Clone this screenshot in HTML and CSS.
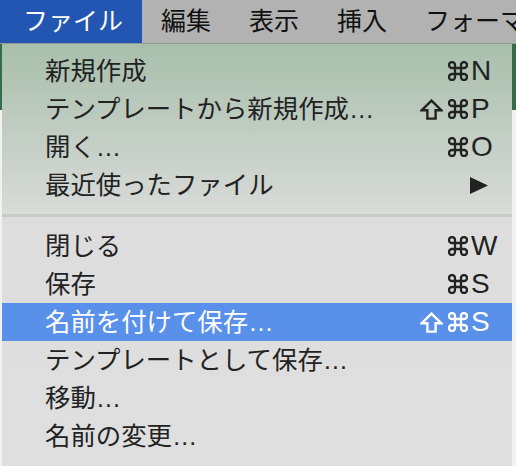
FILE: index.html
```html
<!DOCTYPE html>
<html lang="ja">
<head>
    <meta charset="UTF-8">
    <meta name="viewport" content="width=device-width, initial-scale=1.0">
    <title>ファイル メニュー</title>
    <link rel="stylesheet" href="styles.css">
</head>
<body>
    <div class="menubar">
        <span class="menubar-item active">ファイル</span>
        <span class="menubar-item">編集</span>
        <span class="menubar-item">表示</span>
        <span class="menubar-item">挿入</span>
        <span class="menubar-item">フォーマ</span>
    </div>

    <div class="workspace">
        <div class="menu">
            <div class="menu-row">
                <span class="label">新規作成</span>
                <span class="mods">
                    <svg class="cmd" width="20" height="20" viewBox="0 0 20 20"><path d="M7 7V4A3 3 0 1 0 4 7H16A3 3 0 1 0 13 4V16A3 3 0 1 0 16 13H4A3 3 0 1 0 7 16Z"/></svg>
                </span>
                <span class="key">N</span>
            </div>
            <div class="menu-row">
                <span class="label">テンプレートから新規作成…</span>
                <span class="mods">
                    <svg class="shift" width="23" height="21" viewBox="0 0 23 21"><path d="M11.5 1.6 L21.2 11.2 L15.6 11.2 L15.6 19.6 L7.4 19.6 L7.4 11.2 L1.8 11.2 Z"/></svg>
                    <svg class="cmd" width="20" height="20" viewBox="0 0 20 20"><path d="M7 7V4A3 3 0 1 0 4 7H16A3 3 0 1 0 13 4V16A3 3 0 1 0 16 13H4A3 3 0 1 0 7 16Z"/></svg>
                </span>
                <span class="key">P</span>
            </div>
            <div class="menu-row">
                <span class="label">開く…</span>
                <span class="mods">
                    <svg class="cmd" width="20" height="20" viewBox="0 0 20 20"><path d="M7 7V4A3 3 0 1 0 4 7H16A3 3 0 1 0 13 4V16A3 3 0 1 0 16 13H4A3 3 0 1 0 7 16Z"/></svg>
                </span>
                <span class="key">O</span>
            </div>
            <div class="menu-row">
                <span class="label">最近使ったファイル</span>
                <span class="mods"></span>
                <span class="key">
                    <svg class="submenu" width="18" height="17" viewBox="0 0 18 17"><path d="M0 0 L18 8.5 L0 17 Z"/></svg>
                </span>
            </div>

            <div class="separator"></div>

            <div class="menu-row">
                <span class="label">閉じる</span>
                <span class="mods">
                    <svg class="cmd" width="20" height="20" viewBox="0 0 20 20"><path d="M7 7V4A3 3 0 1 0 4 7H16A3 3 0 1 0 13 4V16A3 3 0 1 0 16 13H4A3 3 0 1 0 7 16Z"/></svg>
                </span>
                <span class="key">W</span>
            </div>
            <div class="menu-row">
                <span class="label">保存</span>
                <span class="mods">
                    <svg class="cmd" width="20" height="20" viewBox="0 0 20 20"><path d="M7 7V4A3 3 0 1 0 4 7H16A3 3 0 1 0 13 4V16A3 3 0 1 0 16 13H4A3 3 0 1 0 7 16Z"/></svg>
                </span>
                <span class="key">S</span>
            </div>
            <div class="menu-row selected">
                <span class="label">名前を付けて保存…</span>
                <span class="mods">
                    <svg class="shift" width="23" height="21" viewBox="0 0 23 21"><path d="M11.5 1.6 L21.2 11.2 L15.6 11.2 L15.6 19.6 L7.4 19.6 L7.4 11.2 L1.8 11.2 Z"/></svg>
                    <svg class="cmd" width="20" height="20" viewBox="0 0 20 20"><path d="M7 7V4A3 3 0 1 0 4 7H16A3 3 0 1 0 13 4V16A3 3 0 1 0 16 13H4A3 3 0 1 0 7 16Z"/></svg>
                </span>
                <span class="key">S</span>
            </div>
            <div class="menu-row">
                <span class="label">テンプレートとして保存…</span>
            </div>
            <div class="menu-row">
                <span class="label">移動…</span>
            </div>
            <div class="menu-row">
                <span class="label">名前の変更…</span>
            </div>
        </div>
    </div>
</body>
</html>
```

FILE: styles.css
```css
body {
    margin: 0;
    font-family: "Liberation Sans", "Noto Sans CJK JP", sans-serif;
    background: #eeeeee;
    overflow: hidden;
}

/* menu bar */
.menubar {
    display: flex;
    height: 43px;
    background: #b2b2b2;
    border-bottom: 1px solid #8f9c91;
    white-space: nowrap;
    overflow: hidden;
}
.menubar-item {
    flex-shrink: 0;
    padding: 0 19px;
    font-size: 25px;
    line-height: 43px;
    color: #111;
}
.menubar-item.active {
    width: 142px;
    box-sizing: border-box;
    padding-left: 23px;
    background: #2355b3;
    color: #fff;
}

/* what lies behind the menu */
.workspace {
    height: 422px;
    padding: 0 4px 0 2px;
    background: linear-gradient(#356d4b 0, #356d4b 66px, #f2f2f2 66px);
}

.menu {
    height: 100%;
    padding-top: 8px;
    box-sizing: border-box;
    background: linear-gradient(#a8bfab 0, #bccabe 70px, #d6d9d6 160px, #dddddd 175px, #dfdfdf 100%);
    color: #222;
}
.menu-row {
    display: flex;
    align-items: center;
    height: 38px;
    padding: 0 10px 0 43px;
}
.menu-row.selected {
    background: #5990ea;
    color: #fff;
}
.label {
    flex: 1;
    font-size: 25.4px;
    line-height: 38px;
    white-space: nowrap;
}
.mods {
    display: flex;
    align-items: center;
    justify-content: flex-end;
    gap: 5px;
}
.cmd {
    display: block;
    fill: none;
    stroke: currentColor;
    stroke-width: 2.3;
}
.shift {
    display: block;
    fill: none;
    stroke: currentColor;
    stroke-width: 2.4;
}
.key {
    display: flex;
    align-items: center;
    width: 34px;
    box-sizing: border-box;
    padding-left: 3px;
    font-size: 28px;
    line-height: 38px;
}
.submenu {
    display: block;
    margin-left: -1px;
    fill: currentColor;
}
.separator {
    height: 3px;
    margin: 10px 0;
    background: #c9cbc9;
}
```
